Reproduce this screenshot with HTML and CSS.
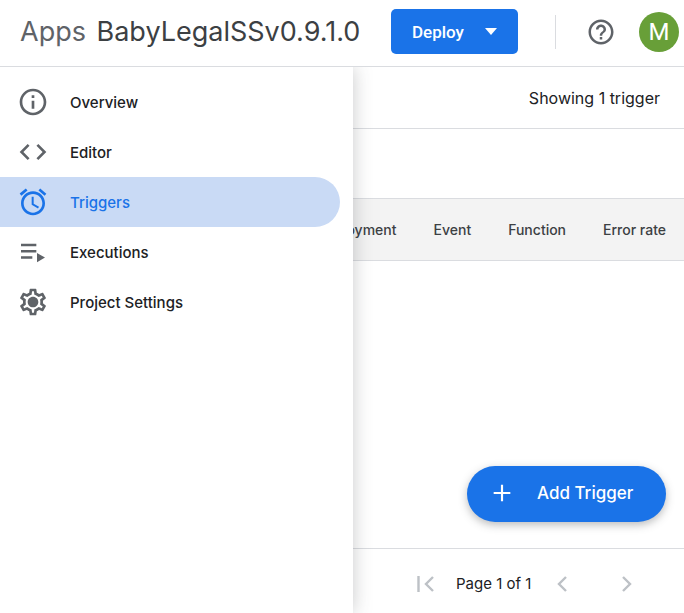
FILE: index.html
```html
<!DOCTYPE html>
<html lang="en">
<head>
<meta charset="utf-8">
<title>Apps Script - Triggers</title>
<link rel="stylesheet" href="styles.css">
</head>
<body>
<header class="topbar">
  <div class="brand">
    <span class="brand-apps">Apps</span>
    <span class="brand-name">BabyLegalSSv0.9.1.0</span>
  </div>
  <button type="button" class="deploy">
    <span>Deploy</span>
    <span class="caret"></span>
  </button>
  <div class="divider"></div>
  <svg class="help" viewBox="0 0 24 24" width="30" height="30"><path fill="#5f6368" d="M11 18h2v-2h-2v2zm1-16C6.48 2 2 6.48 2 12s4.48 10 10 10 10-4.48 10-10S17.52 2 12 2zm0 18c-4.41 0-8-3.59-8-8s3.59-8 8-8 8 3.59 8 8-3.59 8-8 8zm0-14c-2.21 0-4 1.79-4 4h2c0-1.1.9-2 2-2s2 .9 2 2c0 2-3 1.75-3 5h2c0-2.25 3-2.5 3-5 0-2.21-1.79-4-4-4z"/></svg>
  <div class="avatar">M</div>
</header>

<div class="content">
  <nav class="sidebar">
    <a class="nav-item">
      <svg viewBox="0 0 24 24" width="32" height="32"><path fill="#5f6368" d="M11 7h2v2h-2zm0 4h2v6h-2zm1-9C6.48 2 2 6.48 2 12s4.48 10 10 10 10-4.48 10-10S17.52 2 12 2zm0 18c-4.41 0-8-3.59-8-8s3.59-8 8-8 8 3.59 8 8-3.59 8-8 8z"/></svg>
      <span>Overview</span>
    </a>
    <a class="nav-item">
      <svg viewBox="0 0 24 24" width="32" height="32"><path fill="#5f6368" d="M9.4 16.6 4.8 12l4.6-4.6L8 6l-6 6 6 6 1.4-1.4zm5.2 0 4.6-4.6-4.6-4.6L16 6l6 6-6 6-1.4-1.4z"/></svg>
      <span>Editor</span>
    </a>
    <a class="nav-item active">
      <svg viewBox="0 0 24 24" width="32" height="32"><path fill="#1a73e8" d="M22 5.72l-4.6-3.86-1.29 1.53 4.6 3.86L22 5.72zM7.88 3.39 6.6 1.86 2 5.71l1.29 1.53 4.59-3.85zM12.5 8H11v6l4.75 2.85.75-1.23-4-2.37V8zM12 4c-4.97 0-9 4.03-9 9s4.03 9 9 9 9-4.03 9-9-4.03-9-9-9zm0 16c-3.87 0-7-3.13-7-7s3.13-7 7-7 7 3.13 7 7-3.13 7-7 7z"/></svg>
      <span>Triggers</span>
    </a>
    <a class="nav-item">
      <svg viewBox="0 0 24 24" width="32" height="32"><path fill="#5f6368" d="M3 5.8h11.5v1.8H3zm0 4.7h11.5v1.8H3zm0 4.7h8.5V17H3zm12-2.4 6 3.4-6 3.4z"/></svg>
      <span>Executions</span>
    </a>
    <a class="nav-item">
      <svg viewBox="0 0 24 24" width="32" height="32"><path fill="#5f6368" d="M19.43 12.98c.04-.32.07-.64.07-.98s-.03-.66-.07-.98l2.11-1.65c.19-.15.24-.42.12-.64l-2-3.46c-.12-.22-.39-.3-.61-.22l-2.49 1c-.52-.4-1.08-.73-1.69-.98l-.38-2.65A.488.488 0 0 0 14 2h-4c-.25 0-.46.18-.49.42l-.38 2.65c-.61.25-1.17.59-1.69.98l-2.49-1c-.23-.09-.49 0-.61.22l-2 3.46c-.13.22-.07.49.12.64l2.11 1.65c-.04.32-.07.65-.07.98s.03.66.07.98l-2.11 1.65c-.19.15-.24.42-.12.64l2 3.46c.12.22.39.3.61.22l2.49-1c.52.4 1.08.73 1.69.98l.38 2.65c.03.24.24.42.49.42h4c.25 0 .46-.18.49-.42l.38-2.65c.61-.25 1.17-.59 1.69-.98l2.49 1c.23.09.49 0 .61-.22l2-3.46c.12-.22.07-.49-.12-.64l-2.11-1.65zM17.45 11.27c.04.31.05.52.05.73s-.02.43-.05.73l-.14 1.13.89.7 1.08.84-.7 1.21-1.27-.51-1.04-.42-.9.68c-.43.32-.84.56-1.25.73l-1.06.43-.16 1.13-.2 1.35h-1.4l-.19-1.35-.16-1.13-1.06-.43c-.43-.18-.83-.41-1.23-.71l-.91-.7-1.06.43-1.27.51-.7-1.21 1.08-.84.89-.7-.14-1.13c-.03-.31-.05-.54-.05-.74s.02-.43.05-.73l.14-1.13-.89-.7-1.08-.84.7-1.21 1.27.51 1.04.42.9-.68c.43-.32.84-.56 1.25-.73l1.06-.43.16-1.13.2-1.35h1.39l.19 1.35.16 1.13 1.06.43c.43.18.83.41 1.23.71l.91.7 1.06-.43 1.27-.51.7 1.21-1.07.85-.89.7.14 1.13zM12 8c-2.21 0-4 1.79-4 4s1.79 4 4 4 4-1.79 4-4-1.79-4-4-4z"/></svg>
      <span>Project Settings</span>
    </a>
  </nav>

  <main class="main">
    <div class="summary">Showing 1 trigger</div>
    <div class="filters"></div>
    <div class="table-head">
      <span>Deployment</span>
      <span>Event</span>
      <span>Function</span>
      <span>Error rate</span>
    </div>
    <div class="table-body">
      <button type="button" class="add-trigger">
        <svg viewBox="0 0 24 24" width="20" height="20"><path fill="none" stroke="#fff" stroke-width="2.6" d="M12 2v20M2 12h20"/></svg>
        <span>Add Trigger</span>
      </button>
    </div>
    <div class="pager">
      <svg viewBox="0 0 24 24" width="24" height="24"><path fill="none" stroke="#bdc1c6" stroke-width="2.4" d="M4.5 4v16M19 5l-7 7 7 7"/></svg>
      <span class="pager-label">Page 1 of 1</span>
      <svg viewBox="0 0 24 24" width="24" height="24"><path fill="none" stroke="#bdc1c6" stroke-width="2.4" d="M16 5l-7 7 7 7"/></svg>
      <svg class="pager-next" viewBox="0 0 24 24" width="24" height="24"><path fill="none" stroke="#bdc1c6" stroke-width="2.4" d="M8 5l7 7-7 7"/></svg>
    </div>
  </main>
</div>
</body>
</html>
```

FILE: styles.css
```css
* {
  box-sizing: border-box;
}

html, body {
  height: 100%;
}

body {
  margin: 0;
  display: flex;
  flex-direction: column;
  overflow: hidden;
  background: #fff;
  color: #202124;
  font-family: Inter, "Liberation Sans", sans-serif;
}

.topbar {
  height: 67px;
  flex: none;
  display: flex;
  align-items: center;
  padding: 0 5px 3px 20px;
  border-bottom: 1px solid #dadce0;
}

.brand {
  font-size: 27px;
  color: #3c4043;
  white-space: nowrap;
  width: 371px;
}

.brand-apps {
  color: #5f6368;
  margin-right: 3px;
}

.deploy {
  width: 127px;
  height: 45px;
  display: flex;
  align-items: center;
  padding: 0 0 0 21px;
  border: 0;
  border-radius: 5px;
  background: #1a73e8;
  color: #fff;
  font: 500 17px Roboto, sans-serif;
}

.caret {
  margin-left: 21px;
  border-left: 6.5px solid transparent;
  border-right: 6.5px solid transparent;
  border-top: 7px solid #fff;
}

.divider {
  width: 1px;
  height: 34px;
  margin: 0 30px 0 37px;
  background: #dadce0;
}

.help {
  margin-right: 23px;
}

.avatar {
  width: 40px;
  height: 40px;
  border-radius: 50%;
  background: #689f38;
  color: #fff;
  font-family: Roboto, sans-serif;
  font-size: 24px;
  line-height: 40px;
  text-align: center;
}

.content {
  position: relative;
  flex: 1;
  min-height: 0;
}

.sidebar {
  position: absolute;
  z-index: 2;
  top: 0;
  bottom: 0;
  left: 0;
  width: 353px;
  padding: 10px 13px 0 0;
  background: #fff;
  box-shadow: 0 0 18px rgba(60, 64, 67, .28);
  clip-path: inset(0 -20px 0 0);
}

.nav-item {
  height: 50px;
  display: flex;
  align-items: center;
  gap: 21px;
  padding-left: 17px;
  border-radius: 0 25px 25px 0;
  font-size: 15px;
  font-weight: 500;
  color: #202124;
}

.nav-item.active {
  background: #c9daf5;
  color: #1a73e8;
}

.main {
  height: 100%;
  display: flex;
  flex-direction: column;
}

.summary {
  height: 62px;
  flex: none;
  padding: 0 24px 0 0;
  display: flex;
  align-items: center;
  justify-content: flex-end;
  border-bottom: 1px solid #dadce0;
  font-size: 16px;
}

.filters {
  height: 69px;
  flex: none;
}

.table-head {
  height: 63px;
  flex: none;
  display: flex;
  align-items: center;
  justify-content: flex-end;
  gap: 37px;
  padding-right: 18px;
  background: #f3f3f3;
  border-top: 1px solid #dadce0;
  border-bottom: 1px solid #dadce0;
  font-size: 14px;
  font-weight: 500;
  color: #3c4043;
}

.table-body {
  flex: 1;
  position: relative;
}

.add-trigger {
  position: absolute;
  right: 18px;
  bottom: 26px;
  width: 199px;
  height: 56px;
  display: flex;
  align-items: center;
  gap: 25px;
  padding: 0 0 2px 25px;
  border: 0;
  border-radius: 28px;
  background: #1a73e8;
  color: #fff;
  font: 500 17px Inter, sans-serif;
  box-shadow: 0 3px 8px rgba(60, 64, 67, .35);
}

.pager {
  height: 65px;
  flex: none;
  display: flex;
  align-items: center;
  padding: 5px 0 0 414px;
  border-top: 1px solid #dadce0;
  font-size: 15px;
}

.pager-label {
  margin: 0 19px 0 18px;
  white-space: nowrap;
}

.pager-next {
  margin-left: 41px;
}
```
